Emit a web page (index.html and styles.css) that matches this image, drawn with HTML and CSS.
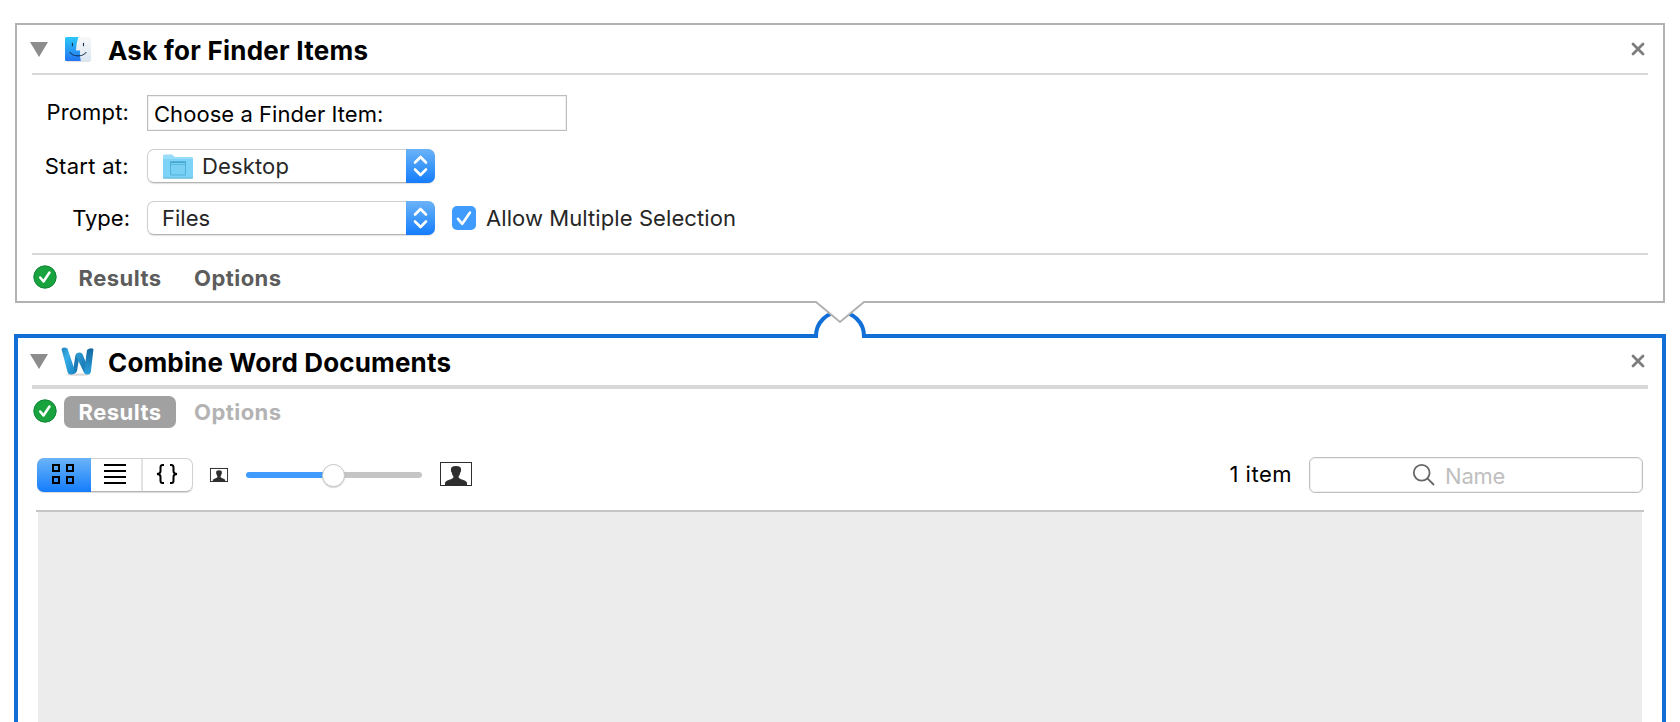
FILE: index.html
```html
<!DOCTYPE html>
<html lang="en">
<head>
<meta charset="utf-8">
<title>Workflow</title>
<link rel="stylesheet" href="styles.css">
</head>
<body>
<main class="workflow">
  <section class="action">
    <header class="action-head">
      <svg class="disclosure" viewBox="0 0 18 15"><path d="M0 0h18L9 15z"/></svg>
      <svg class="app-icon finder" viewBox="0 0 28 28">
        <defs>
          <linearGradient id="fb" x1="0" y1="0" x2="0" y2="1"><stop offset="0" stop-color="#2bc8fa"/><stop offset="1" stop-color="#2375f2"/></linearGradient>
          <linearGradient id="fw" x1="0" y1="0" x2="0" y2="1"><stop offset="0" stop-color="#f8f8f9"/><stop offset="1" stop-color="#dae6f2"/></linearGradient>
        </defs>
        <rect x="1" y="2.6" width="26" height="24" rx="2" fill="#000" opacity=".22"/>
        <rect x="1" y="2" width="26" height="24" rx="1.5" fill="url(#fw)"/>
        <path d="M2.500 2H14.500c-1.500 4-2.200 8-2.500 13.500h4c-.2 4 .2 7 .8 10.500H2.500A1.500 1.500 0 0 1 1 24.500v-21A1.500 1.500 0 0 1 2.500 2z" fill="url(#fb)"/>
        <path d="M8.400 8.200v2.600M19.500 8.200v2.600M6 17.500c4 4.500 12 4.500 16 0" fill="none" stroke="#16304a" stroke-width="1.100" stroke-linecap="round"/>
      </svg>
      <h2 class="title title-ask">Ask for Finder Items</h2>
      <svg class="close" viewBox="0 0 14 14"><path d="M2 2l10 10M12 2L2 12"/></svg>
    </header>
    <div class="form">
      <div class="row row-prompt">
        <span class="label label-prompt">Prompt:</span>
        <div class="field"><span class="t-choose">Choose a Finder Item:</span></div>
      </div>
      <div class="row">
        <span class="label label-start">Start at:</span>
        <div class="popup">
          <svg class="folder" viewBox="0 0 30 25">
            <path d="M0 3.500V1.800Q0 .5 1.300.5h7Q9.300.5 10 1.300L11.700 3H28.700Q30 3 30 4.300V6H0z" fill="#98dcf8"/>
            <path d="M0 5h30v18.500q0 1-1 1H1q-1 0-1-1z" fill="#7dd3f7"/>
            <path d="M.3 24h29.400" stroke="#62b2d2" stroke-width="1"/>
            <path d="M7.500 8.500h15v12.500h-15z" fill="#78d0f5" stroke="#4fb0d9" stroke-width="1"/>
            <path d="M7 8h16" stroke="#3f9fca" stroke-width="1.200"/><path d="M8 10.500h14" stroke="#5bb8df" stroke-width="1"/>
          </svg>
          <span class="t-desktop">Desktop</span>
          <span class="stepper"><svg viewBox="0 0 29 34"><path d="M9 13.500l5.500-5.500 5.500 5.500M9 20.500l5.500 5.500 5.500-5.500"/></svg></span>
        </div>
      </div>
      <div class="row">
        <span class="label label-type">Type:</span>
        <div class="popup">
          <span class="t-files">Files</span>
          <span class="stepper"><svg viewBox="0 0 29 34"><path d="M9 13.500l5.500-5.500 5.500 5.500M9 20.500l5.500 5.500 5.500-5.500"/></svg></span>
        </div>
        <svg class="checkbox" viewBox="0 0 24 24"><rect width="24" height="24" rx="5"/><path d="M6 12.800l4.300 5L18 6.500"/></svg>
        <span class="t-allow">Allow Multiple Selection</span>
      </div>
    </div>
    <footer class="tabs tabs-foot">
      <svg class="ok" viewBox="0 0 24 24"><circle cx="12" cy="12" r="11.200"/><path d="M7.200 12.500l3.300 4L16.500 7.500"/></svg>
      <span class="tab t-results">Results</span>
      <span class="tab t-options">Options</span>
    </footer>
    <svg class="connector" viewBox="0 0 60 40">
      <path class="fill" d="M8 38V35A22 22 0 0 1 52 35V38z"/>
      <path class="arc" d="M6 37V35A24 24 0 0 1 54 35V37"/>
      <path class="tip" d="M5-2v3l25 20L55 1v-3z"/>
      <path class="edge" d="M4 1h2l24 20L54 1h2"/>
    </svg>
  </section>

  <section class="action selected">
    <header class="action-head">
      <svg class="disclosure" viewBox="0 0 18 15"><path d="M0 0h18L9 15z"/></svg>
      <svg class="app-icon word" viewBox="0 0 34 30">
        <defs>
          <linearGradient id="w1" x1="0" y1="0" x2="1" y2="1"><stop offset="0" stop-color="#1f7fb8"/><stop offset=".35" stop-color="#38aee6"/><stop offset="1" stop-color="#1583c4"/></linearGradient>
          <linearGradient id="w2" x1="0" y1="0" x2="0" y2="1"><stop offset="0" stop-color="#14689f"/><stop offset="1" stop-color="#2aa0dc"/></linearGradient>
          <linearGradient id="w3" x1="0" y1="0" x2="1" y2="1"><stop offset="0" stop-color="#2f9fd8"/><stop offset="1" stop-color="#0f649f"/></linearGradient>
        </defs>
        <ellipse cx="17" cy="27.600" rx="12" ry="1.200" fill="#000" opacity=".15"/>
        <path d="M14.500 8Q16 5.300 19 6.300L16 24q-1.500 3.500-4.500 3z" fill="#1a78b4"/>
        <path d="M15.500 6.500Q19 4.500 21.500 7L29 25.500q-4 3.500-6 0L15 9z" fill="url(#w3)"/>
        <path d="M26 3Q29 .3 32.500 2L29.800 25q-.5 2.500-3.500 2.500-2.300 0-3.300-2.300z" fill="url(#w2)"/>
        <path d="M.5 2Q3-.5 6.500 1.500L14.200 24.500q-.7 3-4.200 3-2.700 0-3.500-2.500z" fill="url(#w1)"/>
      </svg>
      <h2 class="title title-combine">Combine Word Documents</h2>
      <svg class="close" viewBox="0 0 14 14"><path d="M2 2l10 10M12 2L2 12"/></svg>
    </header>
    <div class="tabs tabs-top">
      <svg class="ok" viewBox="0 0 24 24"><circle cx="12" cy="12" r="11.200"/><path d="M7.200 12.500l3.300 4L16.500 7.500"/></svg>
      <span class="tab t-results active">Results</span>
      <span class="tab t-options muted">Options</span>
    </div>
    <div class="toolbar">
      <div class="segments">
        <span class="seg seg-on"><svg viewBox="0 0 22 20"><path d="M1 1h6v6H1zM15 1h6v6h-6zM1 13h6v6H1zM15 13h6v6h-6z"/></svg></span>
        <span class="seg seg-list"><svg viewBox="0 0 22 20"><path d="M0 1h22M0 7h22M0 13h22M0 19h22"/></svg></span>
        <span class="seg seg-braces"><svg viewBox="0 0 22 20"><path d="M8 1H6.500Q4.500 1 4.500 3.500v3.800Q4.500 9.700 1 10q3.500.3 3.500 2.700v3.800Q4.500 19 6.500 19H8M14 1h1.500Q17.500 1 17.500 3.500v3.800q0 2.400 3.500 2.700-3.500.3-3.500 2.700v3.800Q17.500 19 15.500 19H14"/></svg></span>
      </div>
      <svg class="person small" viewBox="0 0 32 24" preserveAspectRatio="none"><rect x=".8" y=".8" width="30.400" height="22.400"/><path d="M5 23v-2.500q1-2 5-3 3.500-.8 3.500-3-1.500-1.500-1.800-4-1.200-1-.7-3Q10.500 4 16 4t5 3.500q.5 2-.7 3-.3 2.500-1.800 4 0 2.200 3.500 3 4 1 5 3V23z"/></svg>
      <div class="slider"><span class="knob"></span></div>
      <svg class="person" viewBox="0 0 32 24"><rect x=".5" y=".5" width="31" height="23"/><path d="M5 23v-2.500q1-2 5-3 3.500-.8 3.500-3-1.500-1.500-1.800-4-1.200-1-.7-3Q10.500 4 16 4t5 3.500q.5 2-.7 3-.3 2.500-1.800 4 0 2.200 3.500 3 4 1 5 3V23z"/></svg>
      <span class="count">1 item</span>
      <div class="search">
        <svg viewBox="0 0 22 22"><circle cx="8.700" cy="8.700" r="7.900"/><path d="M14.400 14.400l6.600 6.600"/></svg>
        <span class="t-name">Name</span>
      </div>
    </div>
    <div class="results"><div class="results-body"></div></div>
  </section>
</main>
</body>
</html>
```
FILE: styles.css
```css
* { box-sizing: border-box; }
html, body { margin: 0; height: 722px; overflow: hidden; }
body {
  background: #fff;
  color: #000;
  font: 22px/30px Inter, "Liberation Sans", sans-serif;
  white-space: nowrap;
}
svg { display: block; flex: none; overflow: visible; }
.workflow { display: flex; flex-direction: column; padding: 23px 14px 0; }

.action {
  position: relative;
  width: 1650px;
  height: 280px;
  margin-left: 1px;
  padding: 0 15px;
  border: 2px solid #b2b2b2;
}
.action.selected {
  width: 1652px;
  height: 420px;
  margin: 31px 0 0;
  padding: 0 14px;
  border: 4px solid #126fd8;
}
.action-head {
  display: flex;
  align-items: center;
  height: 50px;
  border-bottom: 2px solid #d9d9d9;
}
.selected .action-head { height: 51px; border-bottom-width: 4px; }
.disclosure { width: 18px; height: 15px; margin-left: -2px; fill: #8c8c8c; }
.app-icon { width: 28px; height: 28px; }
.finder { margin-left: 16px; margin-right: 16px; }
.word { width: 34px; height: 30px; margin: 0 13px 0 13px; }
.title { margin: 0; padding-top: 3px; font-size: 26px; line-height: 36px; font-weight: 700; }
.selected .title { padding-top: 2px; }
.title-ask { letter-spacing: 0.25px; }
.title-combine { letter-spacing: 0.15px; }
.close { width: 14px; height: 14px; margin: 0 3px 0 auto; fill: none; stroke: #7d7d7d; stroke-width: 2.8; stroke-linecap: round; }
.selected .close { margin-bottom: 1px; }

.form { display: flex; flex-direction: column; gap: 18px; height: 180px; padding-top: 20px; border-bottom: 2px solid #d9d9d9; }
.row { display: flex; align-items: center; height: 34px; }
.row-prompt { height: 36px; }
.label { width: 98px; margin-right: 17px; padding-right: 1px; text-align: right; }
.label-prompt { padding-bottom: 2px; letter-spacing: 0.15px; }
.label-start { letter-spacing: 0.3px; }
.label-type { padding-right: 0; }
.field {
  display: flex;
  align-items: center;
  width: 420px;
  height: 36px;
  padding: 2px 0 0 6px;
  border: 1px solid #bdbdbd;
  box-shadow: inset 0 0 0 1px #f0f0f0;
}
.t-choose { letter-spacing: 0.05px; }
.popup {
  display: flex;
  align-items: center;
  width: 288px;
  height: 34px;
  padding-left: 15px;
  border: 1px solid #cfcfcf;
  border-bottom-color: #b5b5b5;
  border-radius: 7px;
  box-shadow: 0 1px 1px rgba(0, 0, 0, .12);
  color: #262626;
}
.folder { width: 30px; height: 25px; margin-right: 9px; }
.t-desktop { letter-spacing: 0.15px; }
.t-files { margin-left: -1px; }
.stepper {
  width: 29px;
  height: 34px;
  margin: -1px -1px -1px auto;
  border-radius: 0 7px 7px 0;
  background: linear-gradient(#6bb3f8, #3f99fa 50%, #147cfd);
}
.stepper svg { width: 29px; height: 34px; fill: none; stroke: #fff; stroke-width: 2.6; stroke-linecap: round; stroke-linejoin: round; }
.checkbox { width: 24px; height: 24px; margin: 0 10px 0 17px; fill: #3f9bfc; }
.checkbox path { fill: none; stroke: #fff; stroke-width: 2.6; stroke-linecap: round; stroke-linejoin: round; }
.t-allow { color: #262626; letter-spacing: 0.08px; }

.tabs { display: flex; align-items: center; font-weight: 700; color: #5c5c5c; }
.tabs-foot { height: 46px; }
.tabs-top { height: 46px; }
.ok { width: 24px; height: 24px; margin: 0 7px 0 1px; position: relative; top: -1px; fill: #18a33f; stroke: #128436; stroke-width: 1; }
.ok path { fill: none; stroke: #fff; stroke-width: 2.5; stroke-linecap: round; stroke-linejoin: round; }
.tab { width: 112px; height: 32px; padding-left: 14px; border-radius: 7px; line-height: 33px; letter-spacing: 0.45px; }
.t-results { padding-left: 14.6px; }
.t-options { margin-left: 4px; }
.active { background: #a1a1a1; color: #fff; }
.muted { color: #b3b3b3; }

.connector { position: absolute; left: 793px; top: 276px; width: 60px; height: 40px; z-index: 2; }
.connector .fill, .connector .tip { fill: #fff; }
.connector .arc { fill: none; stroke: #126fd8; stroke-width: 4; }
.connector .edge { fill: none; stroke: #b2b2b2; stroke-width: 2; }

.toolbar { display: flex; align-items: center; height: 36px; margin-top: 22px; padding: 0 5px; }
.segments {
  display: flex;
  width: 156px;
  height: 34px;
  border: 1px solid #d2d2d2;
  border-bottom-color: #b5b5b5;
  border-radius: 7px;
  box-shadow: 0 1px 1px rgba(0, 0, 0, .15);
}
.seg { display: flex; justify-content: center; padding-top: 5px; }
.seg svg { width: 22px; height: 20px; fill: none; stroke: #000; stroke-width: 2; }
.seg-on { width: 54px; margin: -1px 0 -1px -1px; padding: 6px 2px 0 0; border-radius: 7px 0 0 7px; background: linear-gradient(#6bb3f8, #3f99fa 50%, #147cfd); }
.seg-list { width: 53px; padding-right: 1px; border-right: 2px solid #e3e3e3; }
.seg-braces { width: 49px; padding-right: 2px; }
.person { width: 32px; height: 24px; margin-bottom: 2px; fill: #2e2e2e; }
.person rect { fill: #fff; stroke: #2e2e2e; stroke-width: 1; }
.person.small { width: 18px; height: 14px; margin: 0 18px 0 17px; }
.person.small rect { stroke-width: 1.7; }
.slider { display: flex; align-items: center; justify-content: center; width: 176px; height: 6px; margin-right: 18px; border-radius: 3px; background: linear-gradient(90deg, #3f9bfc 50%, #c5c5c5 50%); }
.knob { width: 23px; height: 23px; margin-right: 1px; border: 1px solid #c6c6c6; border-radius: 50%; background: #fff; box-shadow: 0 1px 1px rgba(0, 0, 0, .15); }
.count { margin: 0 17px 0 auto; padding-bottom: 2px; letter-spacing: 0.5px; }
.search {
  display: flex;
  align-items: center;
  width: 334px;
  height: 36px;
  padding-left: 103px;
  border: 1px solid #bfbfbf;
  border-radius: 6px;
  box-shadow: inset 0 0 0 1px #f0f0f0;
  color: #bfbfbf;
}
.search svg { width: 22px; height: 22px; margin-right: 10px; fill: none; stroke: #666; stroke-width: 1.8; }
.t-name { padding-top: 2px; letter-spacing: -0.2px; }
.results { margin: 17px 4px 0; padding: 0 2px; border-top: 2px solid #c5c5c5; }
.results-body { height: 240px; background: #ececec; }
```
